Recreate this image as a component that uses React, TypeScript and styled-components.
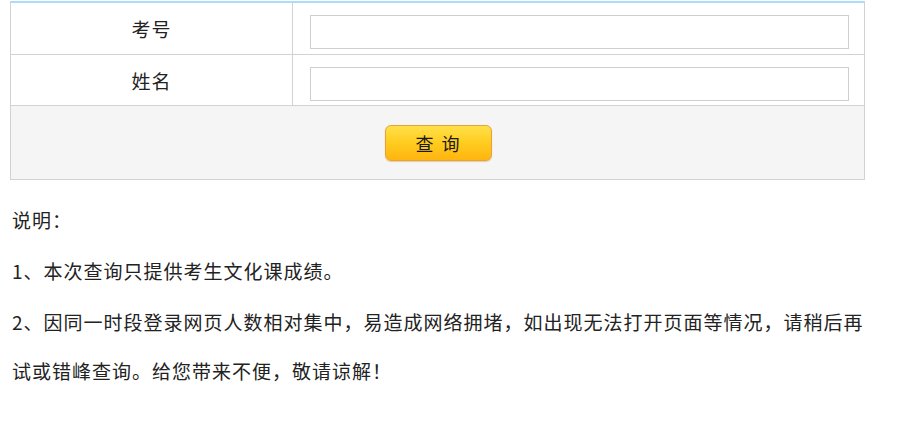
import styled, { createGlobalStyle } from "styled-components"

const GlobalStyle = createGlobalStyle`
    body {
        margin: 0;
        background: #fff;
        font-family: "Noto Sans CJK SC", "Noto Sans", sans-serif;
        color: #222;
    }
`

const Page = styled.div`
    padding: 1px 0 0 10px;
    width: 855px;
`

const QueryForm = styled.div`
    border: 1px solid #d2d2d2;
    border-top: 2px solid #a9ddf9;
`

const FieldRow = styled.div<{ $height: number }>`
    display: grid;
    grid-template-columns: 282px 1fr;
    height: ${p => p.$height}px;
    border-bottom: 1px solid #d2d2d2;
`

const Label = styled.div`
    display: flex;
    align-items: center;
    justify-content: center;
    border-right: 1px solid #d2d2d2;
    font-size: 19px;
    letter-spacing: 1px;
`

const InputCell = styled.div`
    padding: 12px 15px 0 17px;
`

const TextInput = styled.input`
    display: block;
    box-sizing: border-box;
    width: 100%;
    height: 34px;
    margin: 0;
    border: 1px solid #cfcfcf;
    outline: none;
    font-size: 16px;
    padding: 0 6px;
`

const ActionRow = styled.div`
    display: flex;
    align-items: center;
    justify-content: center;
    height: 73px;
    background: #f5f5f5;
`

const QueryButton = styled.button`
    width: 107px;
    height: 36px;
    margin-left: 2px;
    border: 1px solid #e9a23a;
    border-radius: 6px;
    background: linear-gradient(to bottom, #ffe04a 0%, #ffcc1e 50%, #ffb410 100%);
    box-shadow: 0 1px 1px rgba(200, 130, 20, 0.35);
    font-family: "Noto Sans CJK SC", sans-serif;
    font-size: 18px;
    color: #1a1a1a;
    letter-spacing: 2px;
    cursor: pointer;
`

const Notes = styled.div`
    margin-top: 15px;
    padding-left: 2px;
    font-size: 19px;
    letter-spacing: 1px;
    line-height: 49px;
`

const Note = styled.p`
    margin: 0 0 2px;
`

export default function App() {
    return (
        <Page>
            <GlobalStyle />
            <QueryForm>
                <FieldRow $height={51}>
                    <Label>考号</Label>
                    <InputCell><TextInput type="text" /></InputCell>
                </FieldRow>
                <FieldRow $height={50}>
                    <Label>姓名</Label>
                    <InputCell><TextInput type="text" /></InputCell>
                </FieldRow>
                <ActionRow>
                    <QueryButton type="button">查 询</QueryButton>
                </ActionRow>
            </QueryForm>
            <Notes>
                <Note>说明：</Note>
                <Note>1、本次查询只提供考生文化课成绩。</Note>
                <Note>2、因同一时段登录网页人数相对集中，易造成网络拥堵，如出现无法打开页面等情况，请稍后再试或错峰查询。给您带来不便，敬请谅解！</Note>
            </Notes>
        </Page>
    )
}
